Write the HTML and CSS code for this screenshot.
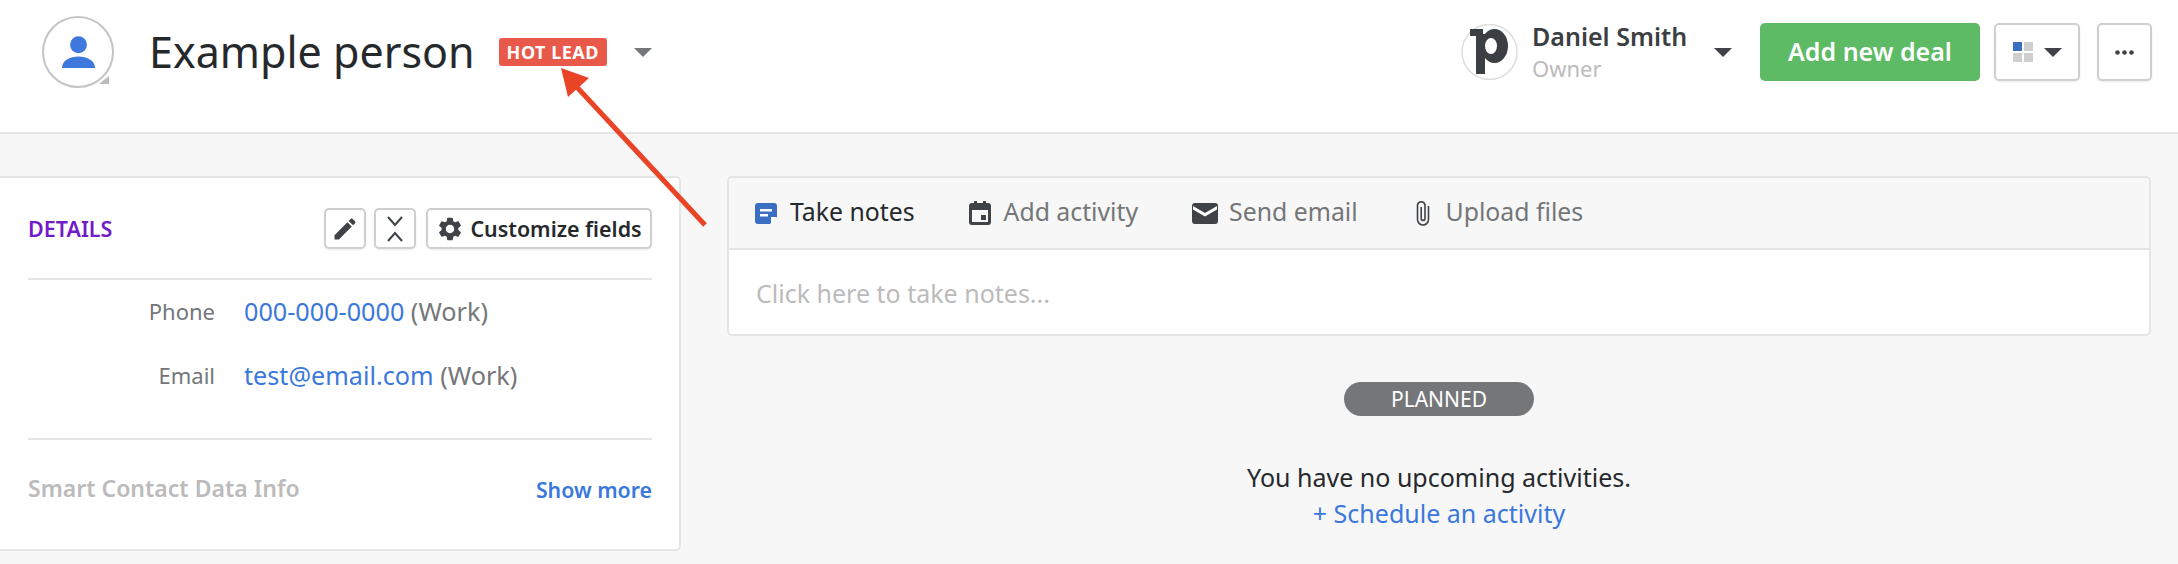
FILE: index.html
```html
<!DOCTYPE html>
<html>
	<head>
		<meta charset="utf-8">
		<title>Example person</title>
		<link rel="stylesheet" href="styles.css">
	</head>
	<body>
		<!--top bar-->
		<div class="top">
			<div class="avatar">
				<svg class="person" viewBox="0 0 34 34"><circle cx="17" cy="9" r="8.7" fill="#3f78dc"/><path d="M0 33C0 25 8 21 17 21S34 25 34 33Z" fill="#3f78dc"/></svg>
				<span class="corner"></span>
			</div>
			<h1 class="name">Example person</h1>
			<span class="badge">HOT LEAD</span>
			<span class="caret caret-grey"></span>
			<div class="top-right">
				<svg class="logo" viewBox="0 0 57 56">
					<circle cx="28.5" cy="28" r="27.5" fill="#fff" stroke="#ddd" stroke-width="1.5"/>
					<path d="M9 5H22V10H24V50H15V12H9Z" fill="#3b3e42"/>
					<path d="M20 22A13.500 17 0 0 1 47 22A13.500 17 0 0 1 20 22ZM24 22A6 8 0 0 0 36 22A6 8 0 0 0 24 22Z" fill="#3b3e42" fill-rule="evenodd"/>
				</svg>
				<div class="owner">
					<div class="owner-name">Daniel Smith</div>
					<div class="owner-role">Owner</div>
				</div>
				<span class="caret"></span>
				<a class="btn-green">Add new deal</a>
				<div class="btn btn-view">
					<span class="grid"><i class="on"></i><i></i><i></i><i></i></span>
					<span class="caret"></span>
				</div>
				<div class="btn btn-more">
					<svg width="19" height="5" viewBox="0 0 19 5"><circle cx="2.5" cy="2.5" r="2.3" fill="#3f4246"/><circle cx="9.5" cy="2.5" r="2.3" fill="#3f4246"/><circle cx="16.5" cy="2.5" r="2.3" fill="#3f4246"/></svg>
				</div>
			</div>
		</div>

		<div class="main">
			<!--details-->
			<div class="card details">
				<div class="details-head">
					<span class="details-title">DETAILS</span>
					<div class="tools">
						<div class="btn tool">
							<svg width="28" height="28" viewBox="0 0 24 24"><path d="M3 17.25V21h3.75L17.81 9.94l-3.75-3.75L3 17.25zM20.71 7.04c.39-.39.39-1.02 0-1.41l-2.34-2.34c-.39-.39-1.02-.39-1.41 0l-1.83 1.83 3.75 3.75 1.83-1.83z" fill="#3f4246"/></svg>
						</div>
						<div class="btn tool">
							<svg width="20" height="28" viewBox="0 0 20 28"><path d="M3 2L10 10L17 2M3 26L10 18L17 26" fill="none" stroke="#3f4246" stroke-width="2"/></svg>
						</div>
						<div class="btn tool-wide">
							<svg width="28" height="28" viewBox="0 0 24 24"><path d="M19.14 12.94c.04-.3.06-.61.06-.94s-.02-.64-.07-.94l2.03-1.58c.18-.14.23-.41.12-.61l-1.92-3.32c-.12-.22-.37-.29-.59-.22l-2.39.96c-.5-.38-1.03-.7-1.62-.94l-.36-2.54c-.04-.24-.24-.41-.48-.41h-3.84c-.24 0-.43.17-.47.41l-.36 2.54c-.59.24-1.13.57-1.62.94l-2.39-.96c-.22-.08-.47 0-.59.22L2.74 8.87c-.12.21-.08.47.12.61l2.03 1.58c-.05.3-.09.63-.09.94s.02.64.07.94l-2.03 1.58c-.18.14-.23.41-.12.61l1.92 3.32c.12.22.37.29.59.22l2.39-.96c.5.38 1.03.7 1.62.94l.36 2.54c.05.24.24.41.48.41h3.84c.24 0 .44-.17.47-.41l.36-2.54c.59-.24 1.13-.56 1.62-.94l2.39.96c.22.08.47 0 .59-.22l1.92-3.32c.12-.22.07-.47-.12-.61l-2.01-1.58zM12 15.6c-1.98 0-3.6-1.62-3.6-3.6s1.62-3.6 3.6-3.6 3.6 1.62 3.6 3.6-1.62 3.6-3.6 3.6z" fill="#3f4246"/></svg>
							<span>Customize fields</span>
						</div>
					</div>
				</div>
				<div class="rows">
					<div class="label">Phone</div>
					<div class="value"><a>000-000-0000</a> (Work)</div>
					<div class="label">Email</div>
					<div class="value"><a>test@email.com</a> (Work)</div>
				</div>
				<div class="smart">
					<span class="smart-title">Smart Contact Data Info</span>
					<a class="show-more">Show more</a>
				</div>
			</div>

			<!--notes and activities-->
			<div class="content">
				<div class="card notes">
					<div class="tabs">
						<div class="tab tab-on">
							<svg width="22" height="21" viewBox="0 0 22 21"><path d="M3 0H19A3 3 0 0 1 22 3V14L15 21H3A3 3 0 0 1 0 18V3A3 3 0 0 1 3 0Z" fill="#3a6fc4"/><path d="M5 6H17V8.5H5ZM5 11H13V13.5H5Z" fill="#fff"/><path d="M22 14H16V21Z" fill="#fff"/></svg>
							<span>Take notes</span>
						</div>
						<div class="tab tab-act">
							<svg width="22" height="24" viewBox="0 0 22 24"><path d="M3 2H5V0H8V2H14V0H17V2H19A3 3 0 0 1 22 5V21A3 3 0 0 1 19 24H3A3 3 0 0 1 0 21V5A3 3 0 0 1 3 2ZM3 9V21H19V9Z" fill="#3f4246" fill-rule="evenodd"/><path d="M12 14H17V19H12Z" fill="#3f4246"/></svg>
							<span>Add activity</span>
						</div>
						<div class="tab tab-mail">
							<svg width="26" height="21" viewBox="0 0 26 21"><path d="M3 0H23A3 3 0 0 1 26 3V18A3 3 0 0 1 23 21H3A3 3 0 0 1 0 18V3A3 3 0 0 1 3 0Z" fill="#3f4246"/><path d="M1 3L13 10L25 3V6.500L13 13.500L1 6.500Z" fill="#fff"/></svg>
							<span>Send email</span>
						</div>
						<div class="tab tab-clip">
							<svg width="14" height="26" viewBox="0 0 14 26"><path d="M12.500 6V19.500A5.500 5.500 0 0 1 1.500 19.500V5A3.800 3.800 0 0 1 9 5V18.500A1.800 1.800 0 0 1 5.200 18.500V7" fill="none" stroke="#3f4246" stroke-width="1.600"/></svg>
							<span>Upload files</span>
						</div>
					</div>
					<div class="note-input">Click here to take notes...</div>
				</div>
				<div class="planned">
					<span class="pill">PLANNED</span>
					<div class="empty">You have no upcoming activities.</div>
					<a class="schedule">+ Schedule an activity</a>
				</div>
			</div>
		</div>

		<!--red arrow on top of the page-->
		<svg class="arrow" width="2178" height="564" viewBox="0 0 2178 564">
			<line x1="705" y1="225" x2="574" y2="84" stroke="#ea4427" stroke-width="5"/>
			<path d="M561 68L589 78L568 97Z" fill="#ea4427"/>
		</svg>
	</body>
</html>
```

FILE: styles.css
```css
html,body{
	margin: 0;
	height: 100%;
}
body{
	position: relative;
	overflow: hidden;
	background-color: #f7f7f7;
	color: #26292c;
	font-family: "Noto Sans", "Open Sans", sans-serif;
}
a{
	color: #3b78dc;
}

.top{
	display: flex;
	align-items: center;
	height: 104px;
	padding: 0 26px 28px 42px;
	background-color: #ffffff;
	border-bottom: #e5e5e5 solid 2px;
}
.avatar{
	position: relative;
	display: flex;
	align-items: center;
	justify-content: center;
	width: 68px;
	height: 68px;
	border: #c4c4c4 solid 2px;
	border-radius: 50%;
}
.person{
	width: 33px;
	height: 33px;
}
.corner{
	position: absolute;
	right: 3px;
	bottom: 2px;
	border-style: solid;
	border-width: 0 0 8px 10px;
	border-color: transparent transparent #bbbbbb transparent;
}
.name{
	margin: 0 0 0 35px;
	font-size: 43px;
	font-weight: 400;
	line-height: 56px;
}
.badge{
	margin-left: 24px;
	padding: 0 8px;
	height: 28px;
	line-height: 28px;
	border-radius: 3px;
	background-color: #e9594a;
	color: #ffffff;
	font-size: 18px;
	font-weight: 700;
	letter-spacing: 0.5px;
}
.caret{
	display: inline-block;
	border-style: solid;
	border-width: 9px 9px 0 9px;
	border-color: #3f4246 transparent transparent transparent;
}
.caret-grey{
	margin-left: 27px;
	border-top-color: #747678;
}
.top-right{
	display: flex;
	align-items: center;
	margin-left: auto;
}
.logo{
	width: 57px;
	height: 56px;
}
.owner{
	margin-left: 14px;
	width: 182px;
}
.owner-name{
	font-size: 25px;
	font-weight: 600;
	line-height: 33px;
	color: #3b3e42;
}
.owner-role{
	font-size: 22px;
	line-height: 31px;
	color: #bbbbbb;
}
.btn-green{
	display: block;
	margin-left: 28px;
	width: 220px;
	height: 58px;
	line-height: 56px;
	text-align: center;
	border-radius: 5px;
	background-color: #5cbb64;
	color: #ffffff;
	font-size: 25px;
	font-weight: 600;
}
.btn{
	display: flex;
	align-items: center;
	justify-content: center;
	box-sizing: border-box;
	background-color: #ffffff;
	border: #cfcfcf solid 2px;
	border-radius: 5px;
	box-shadow: 0 1px 2px rgba(0,0,0,0.08);
}
.btn-view{
	margin-left: 14px;
	width: 86px;
	height: 58px;
}
.grid{
	display: grid;
	grid-template-columns: 9px 9px;
	gap: 2px;
	margin-right: 11px;
}
.grid i{
	height: 9px;
	background-color: #cfcfcf;
}
.grid i.on{
	background-color: #3a6fc4;
}
.btn-more{
	margin-left: 17px;
	width: 55px;
	height: 58px;
}

.main{
	display: flex;
	gap: 46px;
	padding: 42px 27px 0 0;
}
.card{
	box-sizing: border-box;
	background-color: #ffffff;
	border: #e5e5e5 solid 2px;
	border-radius: 5px;
}
.details{
	flex: none;
	width: 681px;
	height: 375px;
	padding: 30px 27px 0 28px;
	border-left: none;
	border-radius: 0 5px 5px 0;
}
.details-head{
	display: flex;
	align-items: center;
	justify-content: space-between;
	padding-bottom: 29px;
	border-bottom: #e5e5e5 solid 2px;
}
.details-title{
	font-size: 21.500px;
	font-weight: 600;
	color: #721cc9;
}
.tools{
	display: flex;
	gap: 8px;
}
.tool{
	width: 42px;
	height: 41px;
}
.tool-wide{
	gap: 6px;
	margin-left: 2px;
	width: 226px;
	height: 41px;
	font-size: 21.400px;
	font-weight: 600;
	color: #26292c;
}
.rows{
	display: grid;
	grid-template-columns: 187px 1fr;
	column-gap: 29px;
	row-gap: 30px;
	padding: 14px 0 46px 0;
	border-bottom: #e5e5e5 solid 2px;
}
.label{
	text-align: right;
	font-size: 22px;
	line-height: 34px;
	color: #747678;
}
.value{
	font-size: 25.200px;
	line-height: 34px;
	color: #747678;
}
.smart{
	display: flex;
	align-items: center;
	justify-content: space-between;
	padding-top: 31px;
}
.smart-title{
	font-size: 23px;
	font-weight: 600;
	color: #bbbbbb;
}
.show-more{
	font-size: 21.300px;
	font-weight: 600;
	padding-top: 4px;
}

.content{
	flex: 1;
}
.tabs{
	display: flex;
	align-items: center;
	gap: 54px;
	height: 70px;
	padding-left: 26px;
	border-bottom: #e5e5e5 solid 2px;
	background-color: #f7f7f7;
	border-radius: 5px 5px 0 0;
}
.tab{
	display: flex;
	align-items: center;
	gap: 12px;
	font-size: 24.800px;
	color: #747678;
}
.tab span{
	padding-bottom: 4px;
}
.tab-on{
	gap: 13px;
	color: #26292c;
}
.tab-act{
	gap: 13px;
}
.tab-mail{
	gap: 11px;
}
.tab-clip{
	gap: 16px;
	margin-left: 4px;
}
.note-input{
	height: 84px;
	padding-left: 27px;
	line-height: 86px;
	font-size: 25px;
	color: #bbbbbb;
}
.planned{
	display: flex;
	flex-direction: column;
	align-items: center;
	padding-top: 46px;
}
.pill{
	width: 190px;
	height: 34px;
	line-height: 34px;
	text-align: center;
	border-radius: 17px;
	background-color: #747678;
	color: #ffffff;
	font-size: 21px;
}
.empty{
	margin-top: 43px;
	font-size: 25px;
	line-height: 36px;
}
.schedule{
	font-size: 25px;
	line-height: 36px;
}

.arrow{
	position: absolute;
	left: 0;
	top: 0;
	pointer-events: none;
}
```
